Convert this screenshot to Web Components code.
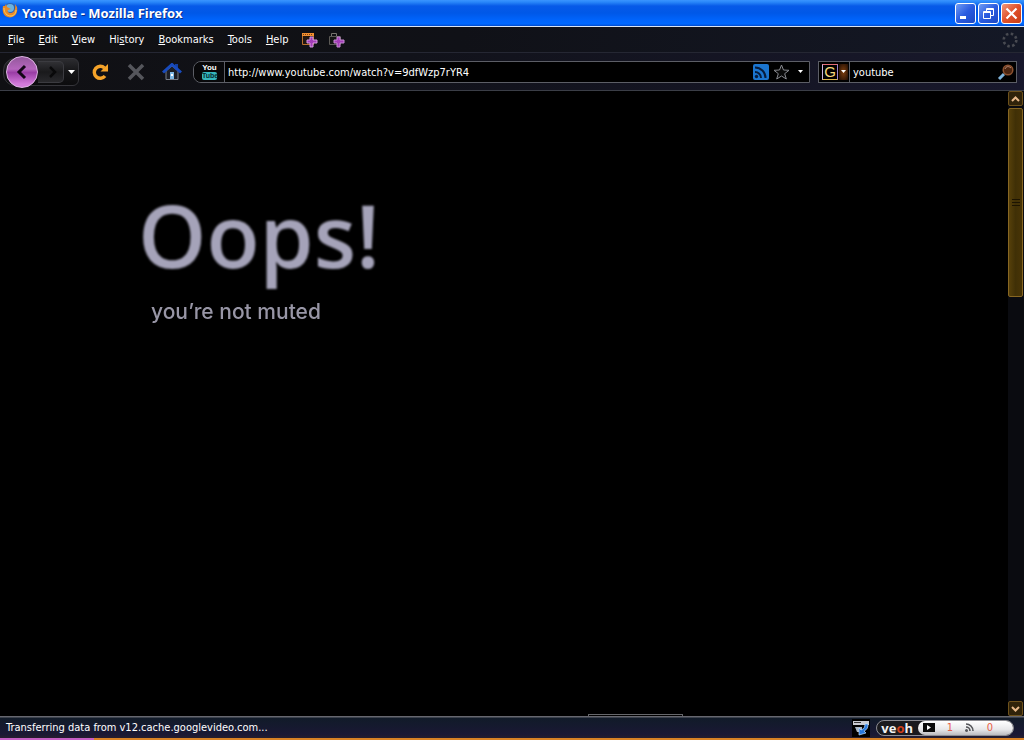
<!DOCTYPE html>
<html lang="en">
<head>
<meta charset="utf-8">
<title>YouTube - Mozilla Firefox</title>
<style>
html,body{height:100%;margin:0;background:#000;overflow:hidden}
body{font:11px/16px "DejaVu Sans Condensed","Noto Sans",sans-serif;color:#fff}
</style>
</head>
<body>
<browser-window></browser-window>
<script>
const reset = `*{box-sizing:border-box}button{font:inherit;color:inherit;background:none;border:0;padding:0;margin:0}svg{display:block;flex:none}`;
function define(name, css, html){
  const t = document.createElement('template');
  t.innerHTML = `<style>${reset}${css}</style>${html}`;
  customElements.define(name, class extends HTMLElement{
    constructor(){
      super();
      this.attachShadow({mode:'open'}).appendChild(t.content.cloneNode(true));
    }
  });
}

define('title-bar', `
:host{display:flex;align-items:center;box-sizing:border-box;height:27px;padding:0 2px;gap:4px;background:linear-gradient(#3a95ff 0,#2a88fa 2px,#075ae8 6px,#0058e8 13px,#0064fc 20px,#0068ff 24px,#0048c8);border-bottom:1px solid #d8e4f4}
h1{flex:1;margin:0;font:bold 13px/18px "Noto Sans",sans-serif;text-shadow:1px 1px 0 #0a2f8a;white-space:nowrap}
.logo{margin-bottom:4px}
.ctl{display:flex;gap:2px}
.ctl button{width:21px;height:21px;border:1px solid #fff;border-radius:3px;background:linear-gradient(135deg,#6f9cf4,#2a5be0 50%,#1c48c4)}
.ctl button.close{background:linear-gradient(135deg,#f0987c,#e0502a 50%,#c83c14)}
`, `
<svg class="logo" width="16" height="18" viewBox="0 0 16 18"><circle cx="8" cy="8" r="7" fill="#2b62b4"/><circle cx="8" cy="6" r="4" fill="#6bb3e0"/><path d="M1 4C0 9 1 15 8 15.500C14 15 16 10 15 5L13 2C14 7 12 11 9 11C6 11 5 9 6 8L9 7L5 5L4 2L3 4Z" fill="#e98a28"/><path d="M2 6C2 11 5 14 9 14C12 14 14 11 14 8" fill="none" stroke="#f9cc5c"/></svg>
<h1>YouTube - Mozilla Firefox</h1>
<div class="ctl">
<button aria-label="Minimize"><svg width="19" height="19"><path d="M4 12h6v3H4z" fill="#fff"/></svg></button>
<button aria-label="Restore"><svg width="19" height="19" fill="none" stroke="#fff"><path d="M7.500 7V4.500h7v7H12M7 5.500h8M4.500 7.500h7v7h-7zM4 8.500h8"/></svg></button>
<button class="close" aria-label="Close"><svg width="19" height="19" stroke="#fff" stroke-width="2.200"><path d="M4.500 4.500l10 10M14.500 4.500l-10 10"/></svg></button>
</div>`);

define('menu-item', `
:host{display:block}
button{padding:0 7px;height:24px;white-space:nowrap}
::slotted(u){text-underline-offset:1px}
`, `<button><slot></slot></button>`);

define('menu-bar', `
:host{display:flex;align-items:center;box-sizing:border-box;height:26px;background:linear-gradient(90deg,#101012,#101117 45%,#141826);border-bottom:1px solid #252733}
nav{display:flex;flex:1;margin-left:1px;align-items:center}
.add{width:27px;height:18px;padding-left:6px}
.throb{margin-right:6px}
`, `
<nav>
<menu-item><u>F</u>ile</menu-item><menu-item><u>E</u>dit</menu-item><menu-item><u>V</u>iew</menu-item><menu-item>Hi<u>s</u>tory</menu-item><menu-item><u>B</u>ookmarks</menu-item><menu-item><u>T</u>ools</menu-item><menu-item><u>H</u>elp</menu-item>
<button class="add" aria-label="New window"><svg width="17" height="18"><path d="M1.500 2.500h11v11h-11z" fill="#211711" stroke="#b96f2c"/><path d="M1 2h12v3H1z" fill="#f09030"/><path d="M2 3.500h10" stroke="#7c3b12" stroke-dasharray="1 1"/><path d="M9 6h3v3h4v3h-4v4H9v-4H6V9h3z" fill="#a33cb8" stroke="#d59be0"/></svg></button>
<button class="add" aria-label="New tab"><svg width="17" height="18"><path d="M1.500 13.500v-8h11v8z" fill="#151515" stroke="#5c5a56"/><path d="M3.500 5V2.500h5V5" fill="none" stroke="#77756f"/><path d="M9 6h3v3h4v3h-4v4H9v-4H6V9h3z" fill="#a33cb8" stroke="#c58bd2"/></svg></button>
</nav>
<svg class="throb" width="16" height="16"><circle cx="8" cy="8" r="6.300" fill="none" stroke="#484a51" stroke-width="2.600" stroke-dasharray="2.500 2.448"/></svg>`);

define('nav-buttons', `
:host{display:flex;align-items:center;width:190px;flex:none}
.pair{display:flex;align-items:center;width:76px;height:28px;border:1px solid #35353a;border-radius:12px 6px 6px 12px;background:linear-gradient(#2c2c30,#151517 50%,#0c0c0e)}
.back{width:32px;height:32px;flex:none;margin-left:2px;border-radius:50%;border:1px solid #dfb4e5;background:linear-gradient(#94589c,#b566bd 40%,#9a3da6 52%,#d37bdb 90%)}
.fwd{width:26px;height:22px;border:1px solid #3b3b40;border-left:0;border-radius:0 5px 5px 0;background:linear-gradient(#303034,#1a1a1c 50%,#29292c)}
.drop{flex:1;height:24px;display:grid;place-items:center}
.tool{width:36px;height:30px;display:grid;place-items:center}
.tool:nth-of-type(1){margin-left:3px}
`, `
<div class="pair">
<button class="back" aria-label="Back"><svg width="30" height="30" fill="none" stroke="#120616" stroke-width="3"><path d="M18 9l-6 6 6 6"/></svg></button>
<button class="fwd" aria-label="Forward"><svg width="25" height="20" fill="none" stroke="#09090a" stroke-width="2.500"><path d="M12 5l5 5-5 5"/></svg></button>
<button class="drop" aria-label="Recent pages"><svg width="7" height="4"><path d="M0 0h7L3.500 4z" fill="#fff"/></svg></button>
</div>
<button class="tool" aria-label="Reload"><svg width="18" height="18"><path d="M13.500 5A6 6 0 1 0 14 13" fill="none" stroke="#f5a329" stroke-width="3.400"/><path d="M9.500 8.500L17 1v7.500z" fill="#f5a329"/></svg></button>
<button class="tool" aria-label="Stop"><svg width="18" height="18" stroke="#55565c" stroke-width="3.500"><path d="M2 2l14 14M16 2L2 16"/></svg></button>
<button class="tool" aria-label="Home"><svg width="20" height="18"><path d="M4 8v8.500h12V8l-6-5z" fill="#1c1e25" stroke="#777c86"/><path d="M13 1h3v6h-3z" fill="#153e9c"/><path d="M1 9.500l9-8 9 8" fill="none" stroke="#174abd" stroke-width="3"/><path d="M8 9h4v7H8z" fill="#7eb7e3"/><path d="M9 11h2v2H9z" fill="#fff"/></svg></button>`);

define('address-bar', `
:host{display:flex;align-items:center;box-sizing:border-box;flex:1;min-width:0;height:22px;border:1px solid #5c5e66;border-radius:8px 0 0 8px;background:#000}
.id{width:31px;height:20px;border-right:1px solid #5c5e66;flex:none;font:bold 8px/8px "Liberation Sans",sans-serif;background:#08080a;border-radius:8px 0 0 8px}
.id span{display:block;width:15px;margin-left:8px;text-align:center}
.id .tube{background:#35b7bd;color:#062b30;border-radius:2px;font-size:7px}
input{flex:1;min-width:0;font:inherit;color:#fff;background:none;border:0;outline:0;padding:2px 3px 0;height:20px}
.icons{display:flex;align-items:center}
.icons button{height:18px;width:20px;display:grid;place-items:center}
.icons button:last-child{width:18px}
`, `
<button class="id" aria-label="Site identity"><span>You</span><span class="tube">Tube</span></button>
<input aria-label="Location" value="http://www.youtube.com/watch?v=9dfWzp7rYR4">
<div class="icons">
<button aria-label="Subscribe"><svg width="16" height="16"><rect width="16" height="16" rx="2" fill="#1b75cf"/><g fill="none" stroke="#061c3c" stroke-width="2"><path d="M2 8a6 6 0 0 1 6 6M2 3.500A10.500 10.500 0 0 1 12.500 14"/></g><circle cx="3.500" cy="12.500" r="1.700" fill="#061c3c"/></svg></button>
<button aria-label="Bookmark"><svg width="17" height="16"><path d="M8.500 1l2 5 5.500.300-4.300 3.400 1.600 5.300-4.800-3-4.800 3 1.600-5.300L1 6.300 6.500 6z" fill="#090909" stroke="#888a90"/></svg></button>
<button aria-label="History list"><svg width="5" height="3"><path d="M0 0h5L2.500 3z" fill="#fff"/></svg></button>
</div>`);

define('search-box', `
:host{display:flex;align-items:center;box-sizing:border-box;width:199px;flex:none;height:22px;border:1px solid #5c5e66;background:#000}
.engine{display:flex;align-items:center;gap:1px;width:31px;height:20px;padding-left:3px;border-right:1px solid #5c5e66;flex:none}
.g{width:16px;height:16px;border:1px solid;border-color:#e66d75 #9a84cc #d9b64d #c9b6e0;color:#f4d77e;font:15px/14px "Liberation Sans",sans-serif;text-align:center}
.arr{width:9px;height:16px;display:grid;place-items:center;background:radial-gradient(#80400f,#1d0b02)}
input{flex:1;min-width:0;font:inherit;color:#fff;background:none;border:0;outline:0;padding:2px 3px 0;height:20px}
.go{width:19px;height:18px}
`, `
<button class="engine" aria-label="Search engine"><span class="g">G</span><span class="arr"><svg width="5" height="3"><path d="M0 0h5L2.500 3z" fill="#fff"/></svg></span></button>
<input aria-label="Search" value="youtube">
<button class="go" aria-label="Search"><svg width="18" height="18"><path d="M7 11l-5 5" stroke="#80b4dc" stroke-width="3"/><circle cx="11" cy="7" r="4.800" fill="#4a2410" stroke="#8c5130" stroke-width="1.500"/><path d="M8 6c1-3 4-3 6-1" fill="none" stroke="#c09078"/></svg></button>`);

define('nav-bar', `
:host{display:flex;align-items:center;box-sizing:border-box;height:38px;padding:0 7px 0 3px;background:linear-gradient(90deg,#101013,#11121a 40%,#18182c);border-bottom:1px solid #3b3e47}
search-box{margin-left:8px}
`, `<nav-buttons></nav-buttons><address-bar></address-bar><search-box></search-box>`);

define('scroll-bar', `
:host{display:flex;flex-direction:column;width:16px;flex:none;background:#0a0b10;box-sizing:border-box}
button{display:grid;place-items:center;width:15px;height:15px;background:#30230a;border:1px solid #6d511b;border-radius:2px}
.thumb{height:189px;margin:2px 0 auto;background:linear-gradient(90deg,#56400a,#403006 50%,#483406);border-color:#876622}
`, `
<button aria-label="Scroll up"><svg width="9" height="6" fill="none" stroke="#e8b98a" stroke-width="2"><path d="M1 5l3.500-3.500L8 5"/></svg></button>
<button class="thumb" aria-label="Scroll position"><svg width="8" height="8" stroke="#1c1402"><path d="M0 .500h8M0 3.500h8M0 6.500h8"/></svg></button>
<button aria-label="Scroll down"><svg width="9" height="6" fill="none" stroke="#e8b98a" stroke-width="2"><path d="M1 1l3.500 3.500L8 1"/></svg></button>`);

define('page-view', `
:host{display:flex;flex:1;min-height:0;background:#000}
main{flex:1;display:flex;flex-direction:column;padding:97px 0 0 138px;color:#a5a3b9}
h2{margin:0;font:600 87px/92px "Open Sans",sans-serif;filter:blur(1px)}
p{margin:20px 0 0 13px;font:500 21px/24px Inter,sans-serif;color:#9896a6;filter:blur(.500px)}
.edge{display:block;width:95px;height:2px;border:1px solid #66676b;border-bottom:0;margin:auto 0 0 450px}
`, `<main><h2>Oops!</h2><p>you’re not muted</p><span class="edge"></span></main><scroll-bar></scroll-bar>`);

define('status-bar', `
:host{display:flex;align-items:center;box-sizing:border-box;height:24px;padding:0 10px 0 6px;border:0 solid;border-width:1px 0 2px;border-image:linear-gradient(90deg,#c65fc4 94px,#d98225 94px) 0 0 2;background:linear-gradient(#66676f 1px,#111b29 2px,#1a1834 75%,#2b202b) border-box}
output{flex:1;white-space:nowrap}
.dl{width:18px;height:18px;background:#000;margin-right:6px}
.veoh{display:flex;align-items:center;width:138px;height:16px;border:1px solid #8c8c92;border-radius:8px;background:#1a1a1e}
.brand{width:41px;text-align:right;padding-right:5px;font:bold 13px/14px "Open Sans",sans-serif;color:#f2f2f2}
.brand i{font-style:normal;color:#d0401c}
.counts{display:flex;align-items:center;flex:1;height:14px;border-radius:7px;padding-left:5px;background:linear-gradient(#fff,#e8e8ea 60%,#bcbcc0);color:#e8604a}
.counts span{text-align:center;width:30px}
`, `
<output>Transferring data from v12.cache.googlevideo.com...</output>
<button class="dl" aria-label="Downloads"><svg width="18" height="18"><path d="M1 2h16v4H1z" fill="#c9cbd2"/><path d="M2 3.500h7" stroke="#333"/><path d="M3 8h7v5H5z" fill="#a9b6c4"/><path d="M16 5c0 5-2 6-4 7l2 2-7 2V9l2 2c3-1 4-3 4-6z" fill="#2878dc" stroke="#bfe0ff" stroke-width=".700"/></svg></button>
<div class="veoh"><span class="brand">ve<i>o</i>h</span><div class="counts">
<svg width="12" height="9"><path d="M0 0h12v9H0z" fill="#0c0c0c"/><path d="M4 2l4 2.500L4 7z" fill="#fff"/></svg><span>1</span>
<svg width="10" height="9" fill="none" stroke="#55565a" stroke-width="1.600"><path d="M1 4a4 4 0 0 1 4 4M1 1a7 7 0 0 1 7 7"/><circle cx="1.500" cy="7.500" r=".700"/></svg><span>0</span>
</div></div>`);

define('browser-window', `
:host{display:flex;flex-direction:column;height:100vh;background:#000}
title-bar,menu-bar,nav-bar,status-bar{flex:none}
`, `<title-bar></title-bar><menu-bar></menu-bar><nav-bar></nav-bar><page-view></page-view><status-bar></status-bar>`);
</script>
</body>
</html>
